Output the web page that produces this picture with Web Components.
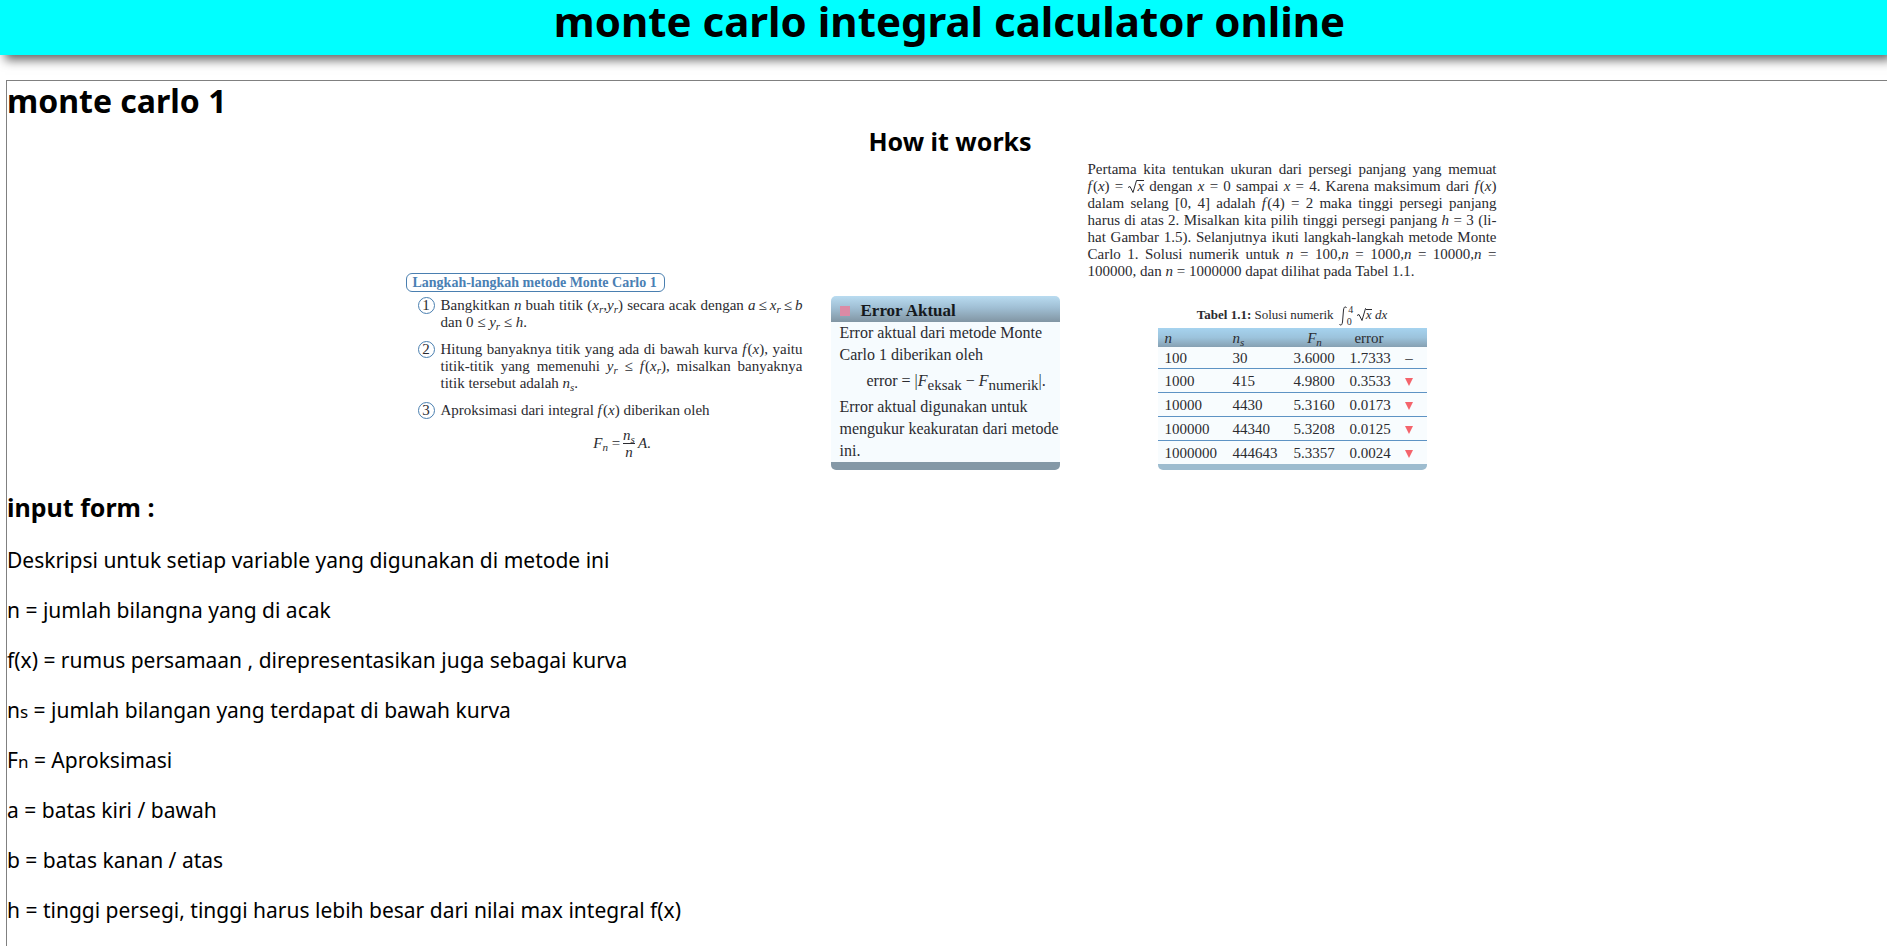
<!DOCTYPE html>
<html lang="id">
<head>
<meta charset="utf-8">
<title>monte carlo integral calculator online</title>
<style>
body { margin: 0; font-family: "Noto Sans", sans-serif; color: #000; background: #fff; }
</style>
</head>
<body>
<mc-app></mc-app>

<template id="t-app">
<style>
:host { display: flex; flex-direction: column; min-height: 100vh; }
</style>
<mc-header>monte carlo integral calculator online</mc-header>
<mc-section>
  <span slot="title">monte carlo 1</span>
  <mc-figures>
    <mc-steps></mc-steps>
    <mc-error></mc-error>
    <mc-example></mc-example>
  </mc-figures>
  <mc-variables></mc-variables>
</mc-section>
</template>

<template id="t-header">
<style>
:host { display: block; background: #0ff; box-shadow: 5px 5px 10px #666; padding-bottom: 13px; text-align: center; }
h1 { margin: 0; padding-left: 12px; font-size: 42px; line-height: 42px; }
</style>
<h1><slot></slot></h1>
</template>

<template id="t-section">
<style>
:host { display: block; flex: 1; margin: 25px 0 0 6px; border: 1px solid #808080; border-width: 1px 0 0 1px; }
h2 { margin: 0; font-size: 32px; line-height: 40px; }
</style>
<h2><slot name="title"></slot></h2>
<slot></slot>
</template>

<template id="t-figures">
<style>
:host { display: block; margin-bottom: 17px; }
h3 { margin: 0; padding-left: 6px; font-size: 25px; line-height: 40px; text-align: center; }
div { display: flex; justify-content: center; align-items: flex-end; gap: 28px; padding-left: 8px;
  font-family: "Liberation Serif", serif; font-size: 15px; line-height: 17px; color: #2b2b30; }
</style>
<h3>How it works</h3>
<div><slot></slot></div>
</template>

<template id="t-line">
<style>
:host { display: block; white-space: nowrap; }
:host([fill]) { text-align-last: justify; }
</style>
<slot></slot>
</template>

<template id="t-steps">
<style>
:host { display: block; width: 397px; margin-bottom: 10px; }
h4 { display: inline-block; box-sizing: border-box; margin: 0; padding: 0 6px; width: 259px; border: 1px solid #4a7fb0; border-radius: 6px;
  font-size: 14px; line-height: 17px; color: #4a80b4; white-space: nowrap; }
ol { list-style: none; margin: 5px 0 0; padding: 0 0 0 12px; display: grid; gap: 10px; }
li { display: grid; grid-template-columns: 16px 1fr; column-gap: 7px; }
b { box-sizing: border-box; width: 17px; height: 17px; border: 1px solid #4a7fb0; border-radius: 50%; line-height: 15px; text-align: center; font-weight: normal; }
sub { font-size: 11px; line-height: 0; vertical-align: -3px; }
.f { display: flex; justify-content: center; align-items: center; gap: 3px; margin-top: 8px; padding-left: 36px; }
.q { display: grid; text-align: center; line-height: 16px; }
.q i:first-child { border-bottom: 1px solid #2b2b30; }
</style>
<h4>Langkah-langkah metode Monte Carlo 1</h4>
<ol>
<li><b>1</b><div><mc-line fill>Bangkitkan <i>n</i> buah titik (<i>x<sub>r</sub></i>,<i>y<sub>r</sub></i>) secara acak dengan <i>a</i>&#8201;≤&#8201;<i>x<sub>r</sub></i>&#8201;≤&#8201;<i>b</i></mc-line><mc-line>dan 0 ≤ <i>y<sub>r</sub></i> ≤ <i>h</i>.</mc-line></div></li>
<li><b>2</b><div><mc-line fill>Hitung banyaknya titik yang ada di bawah kurva <i>f&#8202;</i>(<i>x</i>), yaitu</mc-line><mc-line fill>titik-titik yang memenuhi <i>y<sub>r</sub></i> ≤ <i>f&#8202;</i>(<i>x<sub>r</sub></i>), misalkan banyaknya</mc-line><mc-line>titik tersebut adalah <i>n<sub>s</sub></i>.</mc-line></div></li>
<li><b>3</b><mc-line>Aproksimasi dari integral <i>f&#8202;</i>(<i>x</i>) diberikan oleh</mc-line></li>
</ol>
<div class="f"><span><i>F<sub>n</sub></i> =</span><span class="q"><i>n<sub>s</sub></i><i>n</i></span><span><i>A</i>.</span></div>
</template>

<template id="t-error">
<style>
:host { display: block; box-sizing: border-box; width: 229px; margin-bottom: 0; border-radius: 5px; overflow: hidden; background: #f6fbfe; border-bottom: 8px solid #8498a6; font-size: 16px; line-height: 22px; }
h4 { display: flex; align-items: center; gap: 11px; margin: 0; padding: 3px 9px 0; height: 23px; font-size: 17px; background: linear-gradient(#b9dcf1, #a0bfd4 45%, #8195a3); color: #15191d; }
h4::before { content: ""; width: 10px; height: 10px; background: #dc8aa5; }
div { padding: 0 0 0 9px; }
.f { line-height: 30px; padding-left: 27px; }
sub { font-size: 15px; line-height: 0; vertical-align: -4px; }
</style>
<h4>Error Aktual</h4>
<div>
<mc-line>Error aktual dari metode Monte</mc-line>
<mc-line>Carlo 1 diberikan oleh</mc-line>
<mc-line class="f">error = |<i>F</i><sub>eksak</sub> − <i>F</i><sub>numerik</sub>|.</mc-line>
<mc-line>Error aktual digunakan untuk</mc-line>
<mc-line>mengukur keakuratan dari metode</mc-line>
<mc-line>ini.</mc-line>
</div>
</template>

<template id="t-root">
<style>
:host { display: inline-block; }
svg { width: 9px; height: 13px; vertical-align: -2px; }
i { border-top: 1px solid currentColor; display: inline-block; line-height: 10px; }
</style><svg viewBox="0 0 9 13" fill="none" stroke="currentColor"><path d="M0 7.5 2 6.500 5 12.500 8.500 .5H9"/></svg><i>x</i>
</template>

<template id="t-example">
<style>
:host { display: block; width: 409px; }
sub { font-size: 11px; line-height: 0; vertical-align: -3px; }
table { width: 269px; margin: 22px auto 0 70px; border-collapse: separate; border-spacing: 0; border-radius: 5px; overflow: hidden; border-bottom: 6px solid #9dbccf; background: #f8fcfe; table-layout: fixed; }
caption { font-size: 13px; line-height: 26px; white-space: nowrap; }
.int { display: inline-grid; grid-template-columns: 8px 8px; vertical-align: middle; font-size: 10px; line-height: 12px; margin: 0 2px; }
.int svg { grid-row: 1 / 3; width: 8px; height: 20px; align-self: center; }
.int span:last-child { margin-left: -3px; }
th, td { padding: 0 0 0 7px; text-align: left; font-weight: normal; }
th { height: 19px; background: linear-gradient(#a6d3ef, #9cc3dc 50%, #86a0b2); line-height: 18px; }
th:nth-child(3), th:nth-child(4) { text-align: center; padding-right: 7px; }
td { height: 23px; border-bottom: 1px solid #5e93c4; line-height: 22px; }
tr:first-child td { line-height: 18px; height: 21px; }
tr:last-child td { border-bottom: 0; }
td:last-child { padding: 0 4px 0 0; text-align: center; }
td svg { width: 8px; height: 8px; fill: #f4646c; }
</style>
<mc-line fill>Pertama kita tentukan ukuran dari persegi panjang yang memuat</mc-line>
<mc-line fill><i>f&#8202;</i>(<i>x</i>) = <mc-root></mc-root> dengan <i>x</i> = 0 sampai <i>x</i> = 4. Karena maksimum dari <i>f&#8202;</i>(<i>x</i>)</mc-line>
<mc-line fill>dalam selang [0, 4] adalah <i>f&#8202;</i>(4) = 2 maka tinggi persegi panjang</mc-line>
<mc-line fill>harus di atas 2. Misalkan kita pilih tinggi persegi panjang <i>h</i> = 3 (li-</mc-line>
<mc-line fill>hat Gambar 1.5). Selanjutnya ikuti langkah-langkah metode Monte</mc-line>
<mc-line fill>Carlo 1. Solusi numerik untuk <i>n</i> = 100,<i>n</i> = 1000,<i>n</i> = 10000,<i>n</i> =</mc-line>
<mc-line>100000, dan <i>n</i> = 1000000 dapat dilihat pada Tabel 1.1.</mc-line>
<table>
<caption><b>Tabel 1.1:</b> Solusi numerik <span class="int"><svg viewBox="0 0 8 20" fill="none" stroke="currentColor"><path d="M7.500 2C6.500 0 5 .5 4.500 4L3.500 16C3 19.500 1.500 20 .5 18"/></svg><span>4</span><span>0</span></span><mc-root></mc-root> <i>dx</i></caption>
<colgroup><col width="68"><col width="61"><col width="56"><col width="53"><col width="31"></colgroup>
<thead><tr><th><i>n</i></th><th><i>n<sub>s</sub></i></th><th><i>F<sub>n</sub></i></th><th>error</th><th></th></tr></thead>
<tbody>
<tr><td>100</td><td>30</td><td>3.6000</td><td>1.7333</td><td>–</td></tr>
<tr><td>1000</td><td>415</td><td>4.9800</td><td>0.3533</td><td><svg viewBox="0 0 8 8"><path d="M0 0H8L4 8z"/></svg></td></tr>
<tr><td>10000</td><td>4430</td><td>5.3160</td><td>0.0173</td><td><svg viewBox="0 0 8 8"><path d="M0 0H8L4 8z"/></svg></td></tr>
<tr><td>100000</td><td>44340</td><td>5.3208</td><td>0.0125</td><td><svg viewBox="0 0 8 8"><path d="M0 0H8L4 8z"/></svg></td></tr>
<tr><td>1000000</td><td>444643</td><td>5.3357</td><td>0.0024</td><td><svg viewBox="0 0 8 8"><path d="M0 0H8L4 8z"/></svg></td></tr>
</tbody>
</table>
</template>

<template id="t-variables">
<style>
:host { display: block; }
h3 { margin: 0 0 18px; font-size: 25px; line-height: 40px; }
p { margin: 0 0 20px; font-size: 21px; line-height: 30px; }
small { font-size: 17px; line-height: 0; }
</style>
<h3>input form :</h3>
<p>Deskripsi untuk setiap variable yang digunakan di metode ini</p>
<p>n = jumlah bilangna yang di acak</p>
<p>f(x) = rumus persamaan , direpresentasikan juga sebagai kurva</p>
<p>n<small>s</small> = jumlah bilangan yang terdapat di bawah kurva</p>
<p>F<small>n</small> = Aproksimasi</p>
<p>a = batas kiri / bawah</p>
<p>b = batas kanan / atas</p>
<p>h = tinggi persegi, tinggi harus lebih besar dari nilai max integral f(x)</p>
</template>

<script>
for (const name of ['line', 'root', 'header', 'section', 'figures', 'steps', 'error', 'example', 'variables', 'app']) {
  customElements.define('mc-' + name, class extends HTMLElement {
    constructor() {
      super();
      this.attachShadow({ mode: 'open' }).append(document.getElementById('t-' + name).content.cloneNode(true));
    }
  });
}
</script>
</body>
</html>
